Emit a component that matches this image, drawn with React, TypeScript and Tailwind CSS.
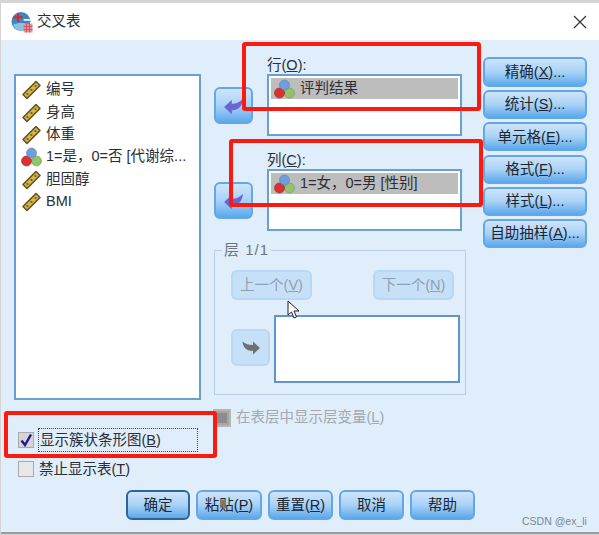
const F = '[font-family:"Liberation_Sans","Noto_Sans_CJK_SC",sans-serif]';

function Ruler() {
  return (
    <svg width="21" height="20" viewBox="0 0 20 20" className="shrink-0">
      <path d="M1.5 14.5 L14.5 1.5 L18.5 5.5 L5.5 18.5 Z" fill="#d9b53c" stroke="#5b5330" strokeWidth="1.6" strokeLinejoin="round" />
      <circle cx="6" cy="14" r="1.1" fill="#6b5a1c" />
      <circle cx="10" cy="10" r="1.1" fill="#6b5a1c" />
      <circle cx="14" cy="6" r="1.1" fill="#6b5a1c" />
    </svg>
  );
}

function Nominal() {
  return (
    <svg width="21" height="20" viewBox="0 0 21 20" className="shrink-0">
      <circle cx="15.5" cy="14" r="5" fill="#93c26c" stroke="#6e9a50" strokeWidth="0.6" />
      <circle cx="5.5" cy="14" r="5" fill="#d8332f" stroke="#9a2a2a" strokeWidth="0.6" />
      <circle cx="10.5" cy="6" r="5" fill="#6c9fdc" stroke="#5a7fb0" strokeWidth="0.6" />
    </svg>
  );
}

function ArrowL() {
  return (
    <svg width="22" height="18" viewBox="0 0 20 16">
      <path d="M1 9 L8 2.5 L8 6 C12 6 15 5 18 1.5 C18 8 14 12 8 12 L8 15.5 Z" fill="#6a66d0" />
    </svg>
  );
}

function ArrowR() {
  return (
    <svg width="20" height="16" viewBox="0 0 20 16">
      <path d="M19 8 L12 1.5 L12 5 C8 5 4 4 1.5 1.5 C2 8 6 11 12 11 L12 14.5 Z" fill="#707070" />
    </svg>
  );
}

function Btn({ w, h, className, children }: { w: string; h: string; className?: string; children?: React.ReactNode }) {
  return (
    <div
      className={`${w} ${h} ${className ?? ""} flex items-center justify-center rounded-[6px] border-2 border-[#63a7e6] bg-gradient-to-b from-[#cfe4fa] via-[#a8d2f6] to-[#5aa9ec] pt-[1px] text-[14.5px] text-[#1c2530]`}
    >
      {children}
    </div>
  );
}

function DisabledBtn({ w, h, className, children }: { w: string; h: string; className?: string; children?: React.ReactNode }) {
  return (
    <div
      className={`${w} ${h} ${className ?? ""} flex items-center justify-center rounded-[6px] border-2 border-[#b8d8f4] bg-[#c6e0f8] pt-[1px] text-[14.5px] text-[#8fa0ae]`}
    >
      {children}
    </div>
  );
}

function Item({ icon, children }: { icon: React.ReactNode; children: React.ReactNode }) {
  return (
    <div className="flex h-[22.4px] items-center gap-[4px] text-[14.5px] text-[#2a2f36] whitespace-nowrap">
      {icon}
      <span>{children}</span>
    </div>
  );
}

function VarBox({ label, text, mb }: { label: React.ReactNode; text: string; mb: string }) {
  return (
    <div className={mb}>
      <div className="h-[17px] text-[14.5px] leading-[16px] text-[#2a2f36]">{label}</div>
      <div className="h-[62px] w-[195px] border-2 border-[#6a9fd4] bg-white p-[2px]">
        <div className="flex h-[21px] w-[187px] items-center gap-[5px] bg-[#bdbdbd] pl-[3px] text-[14.5px] text-[#2a2f36]">
          <Nominal />
          <span className="pt-[1px]">{text}</span>
        </div>
      </div>
    </div>
  );
}

function RedBox({ className }: { className: string }) {
  return <div className={`absolute rounded-[3px] border-[4px] border-[#fb1a10] ${className}`} />;
}

export default function App() {
  return (
    <div className={`${F} relative flex h-[535px] w-[599px] flex-col overflow-hidden bg-[#d4d4d4] pt-[3px] pb-[1px] pl-[1px]`}>
      {/* title */}
      <div className="flex h-[37px] shrink-0 items-center bg-white pl-[10px] pr-[12px]">
        <svg width="22" height="22" viewBox="0 0 21 21" className="shrink-0">
          <circle cx="9.5" cy="10" r="9" fill="#3f86bd" />
          <path d="M2 13 C6 11 13 11 17 13 C16 17 13 19 9.5 19 C6 19 3 17 2 13 Z" fill="#8cc0e0" />
          <path d="M2.5 6 H11 M6.8 2 V10.5" stroke="#e2232a" strokeWidth="2" fill="none" />
          <path d="M12 8.5 H18" stroke="#fff" strokeWidth="1.6" />
          <rect x="12" y="12" width="8.5" height="8.5" fill="#e88f96" />
          <path d="M12 14.8 H20.5 M12 17.6 H20.5 M14.8 12 V20.5 M17.6 12 V20.5" stroke="#c9444e" strokeWidth="0.7" />
        </svg>
        <span className="ml-[4px] text-[14.5px] text-[#2a2f36]">交叉表</span>
        <svg width="14" height="14" viewBox="0 0 14 14" className="ml-auto">
          <path d="M1 1 L13 13 M13 1 L1 13" stroke="#333" strokeWidth="1.2" />
        </svg>
      </div>

      {/* body */}
      <div className="flex-1 border-b-2 border-[#9c9c9c] bg-[#e0edfb] pl-[13px] pt-[17px]">
        <div className="flex h-[367px] items-start">
          {/* variables */}
          <div className="mt-[17px] h-[326px] w-[187px] shrink-0 border-2 border-[#6a9fd4] bg-white pl-[5px] pt-[3px]">
            <Item icon={<Ruler />}>编号</Item>
            <Item icon={<Ruler />}>身高</Item>
            <Item icon={<Ruler />}>体重</Item>
            <Item icon={<Nominal />}>1=是，0=否 [代谢综...</Item>
            <Item icon={<Ruler />}>胆固醇</Item>
            <Item icon={<Ruler />}>BMI</Item>
          </div>

          {/* center */}
          <div className="ml-[13px] w-[252px] shrink-0">
            <div className="flex">
              <div className="w-[53px] shrink-0 pt-[30px]">
                <Btn w="w-[39px]" h="h-[37px]"><ArrowL /></Btn>
                <Btn w="w-[39px]" h="h-[37px]" className="mt-[58px]"><ArrowL /></Btn>
              </div>
              <div>
                <VarBox mb="mb-[16px]" text="评判结果" label={<>行(<u>O</u>):</>} />
                <VarBox mb="mb-[11px]" text="1=女，0=男 [性别]" label={<>列(<u>C</u>):</>} />
              </div>
            </div>

            {/* layer group */}
            <fieldset className="h-[153px] w-[252px] min-w-0 border border-[#b7cde3] pl-[16px] pr-[5px]">
              <legend className="ml-[-9px] px-[2px] text-[15px] leading-[16px] tracking-[1px] text-[#6d7680]">层 1/1</legend>
              <div className="mt-[12px] flex justify-between pr-[6px]">
                <DisabledBtn w="w-[81px]" h="h-[30px]">上一个(<u>V</u>)</DisabledBtn>
                <DisabledBtn w="w-[81px]" h="h-[30px]">下一个(<u>N</u>)</DisabledBtn>
              </div>
              <div className="mt-[15px] flex items-start">
                <DisabledBtn w="w-[39px]" h="h-[37px]" className="mt-[14px] shrink-0"><ArrowR /></DisabledBtn>
                <div className="ml-[4px] h-[68px] w-[186px] border-2 border-[#5f95cd] bg-white" />
              </div>
            </fieldset>

            <div className="ml-[-1px] mt-[12px] flex items-center gap-[5px] text-[14.5px] text-[#a3a9af]">
              <div className="h-[18px] w-[18px] border-2 border-[#b5b5b5] bg-[#8c8c8c] shadow-[inset_0_0_0_2px_#a5a5a5]" />
              <span>在表层中显示层变量(<u>L</u>)</span>
            </div>
          </div>

          {/* action buttons */}
          <div className="ml-[17px] flex w-[104px] shrink-0 flex-col gap-[3.2px]">
            <Btn w="w-[104px]" h="h-[30px]">精确(<u>X</u>)...</Btn>
            <Btn w="w-[104px]" h="h-[29px]">统计(<u>S</u>)...</Btn>
            <Btn w="w-[104px]" h="h-[29px]">单元格(<u>E</u>)...</Btn>
            <Btn w="w-[104px]" h="h-[29px]">格式(<u>F</u>)...</Btn>
            <Btn w="w-[104px]" h="h-[29px]">样式(<u>L</u>)...</Btn>
            <Btn w="w-[104px]" h="h-[29px]">自助抽样(<u>A</u>)...</Btn>
          </div>
        </div>

        {/* checkboxes */}
        <div className="mt-[4px] flex h-[24px] items-center pl-[4px] text-[14.5px] text-[#2a2f36]">
          <div className="flex h-[16px] w-[16px] items-center justify-center border border-[#a9a9a9] bg-[#d6d6d6]">
            <svg width="14" height="14" viewBox="0 0 14 14">
              <path d="M2.5 7.5 L6 12 L12 1.5" fill="none" stroke="#1f1a8c" strokeWidth="2.4" />
            </svg>
          </div>
          <span className="ml-[4px] flex h-[24px] w-[160px] items-center border border-dotted border-[#444] pl-[1px] pt-[1px]">
            显示簇状条形图(<u>B</u>)
          </span>
        </div>
        <div className="mt-[7px] flex h-[20px] items-center pl-[4px] text-[14.5px] text-[#2a2f36]">
          <div className="h-[16px] w-[16px] border border-[#a9a9a9] bg-[#e8e8e8]" />
          <span className="ml-[5px] pt-[1px]">禁止显示表(<u>T</u>)</span>
        </div>

        {/* bottom buttons */}
        <div className="mt-[11px] flex gap-[6px] pl-[112px]">
          <Btn w="w-[64px]" h="h-[30px]" className="border-[#2f6596]!">确定</Btn>
          <Btn w="w-[66px]" h="h-[30px]">粘贴(<u>P</u>)</Btn>
          <Btn w="w-[65px]" h="h-[30px]">重置(<u>R</u>)</Btn>
          <Btn w="w-[65px]" h="h-[30px]">取消</Btn>
          <Btn w="w-[65px]" h="h-[30px]">帮助</Btn>
        </div>
      </div>

      {/* annotations */}
      <RedBox className="left-[242px] top-[42px] h-[69px] w-[239px]" />
      <RedBox className="left-[229px] top-[139px] h-[68px] w-[254px]" />
      <RedBox className="left-[4px] top-[411px] h-[47px] w-[213px]" />

      {/* cursor */}
      <svg width="14" height="20" viewBox="0 0 14 20" className="absolute left-[287px] top-[300px]">
        <path d="M1 1 L1 15 L4.5 12 L7 18 L9.5 17 L7 11 L12 11 Z" fill="#fff" stroke="#222" strokeWidth="1" />
      </svg>

      <div className="absolute left-[522px] top-[514px] text-[10.5px] text-[#7d8790]">CSDN @ex_li</div>
    </div>
  );
}
